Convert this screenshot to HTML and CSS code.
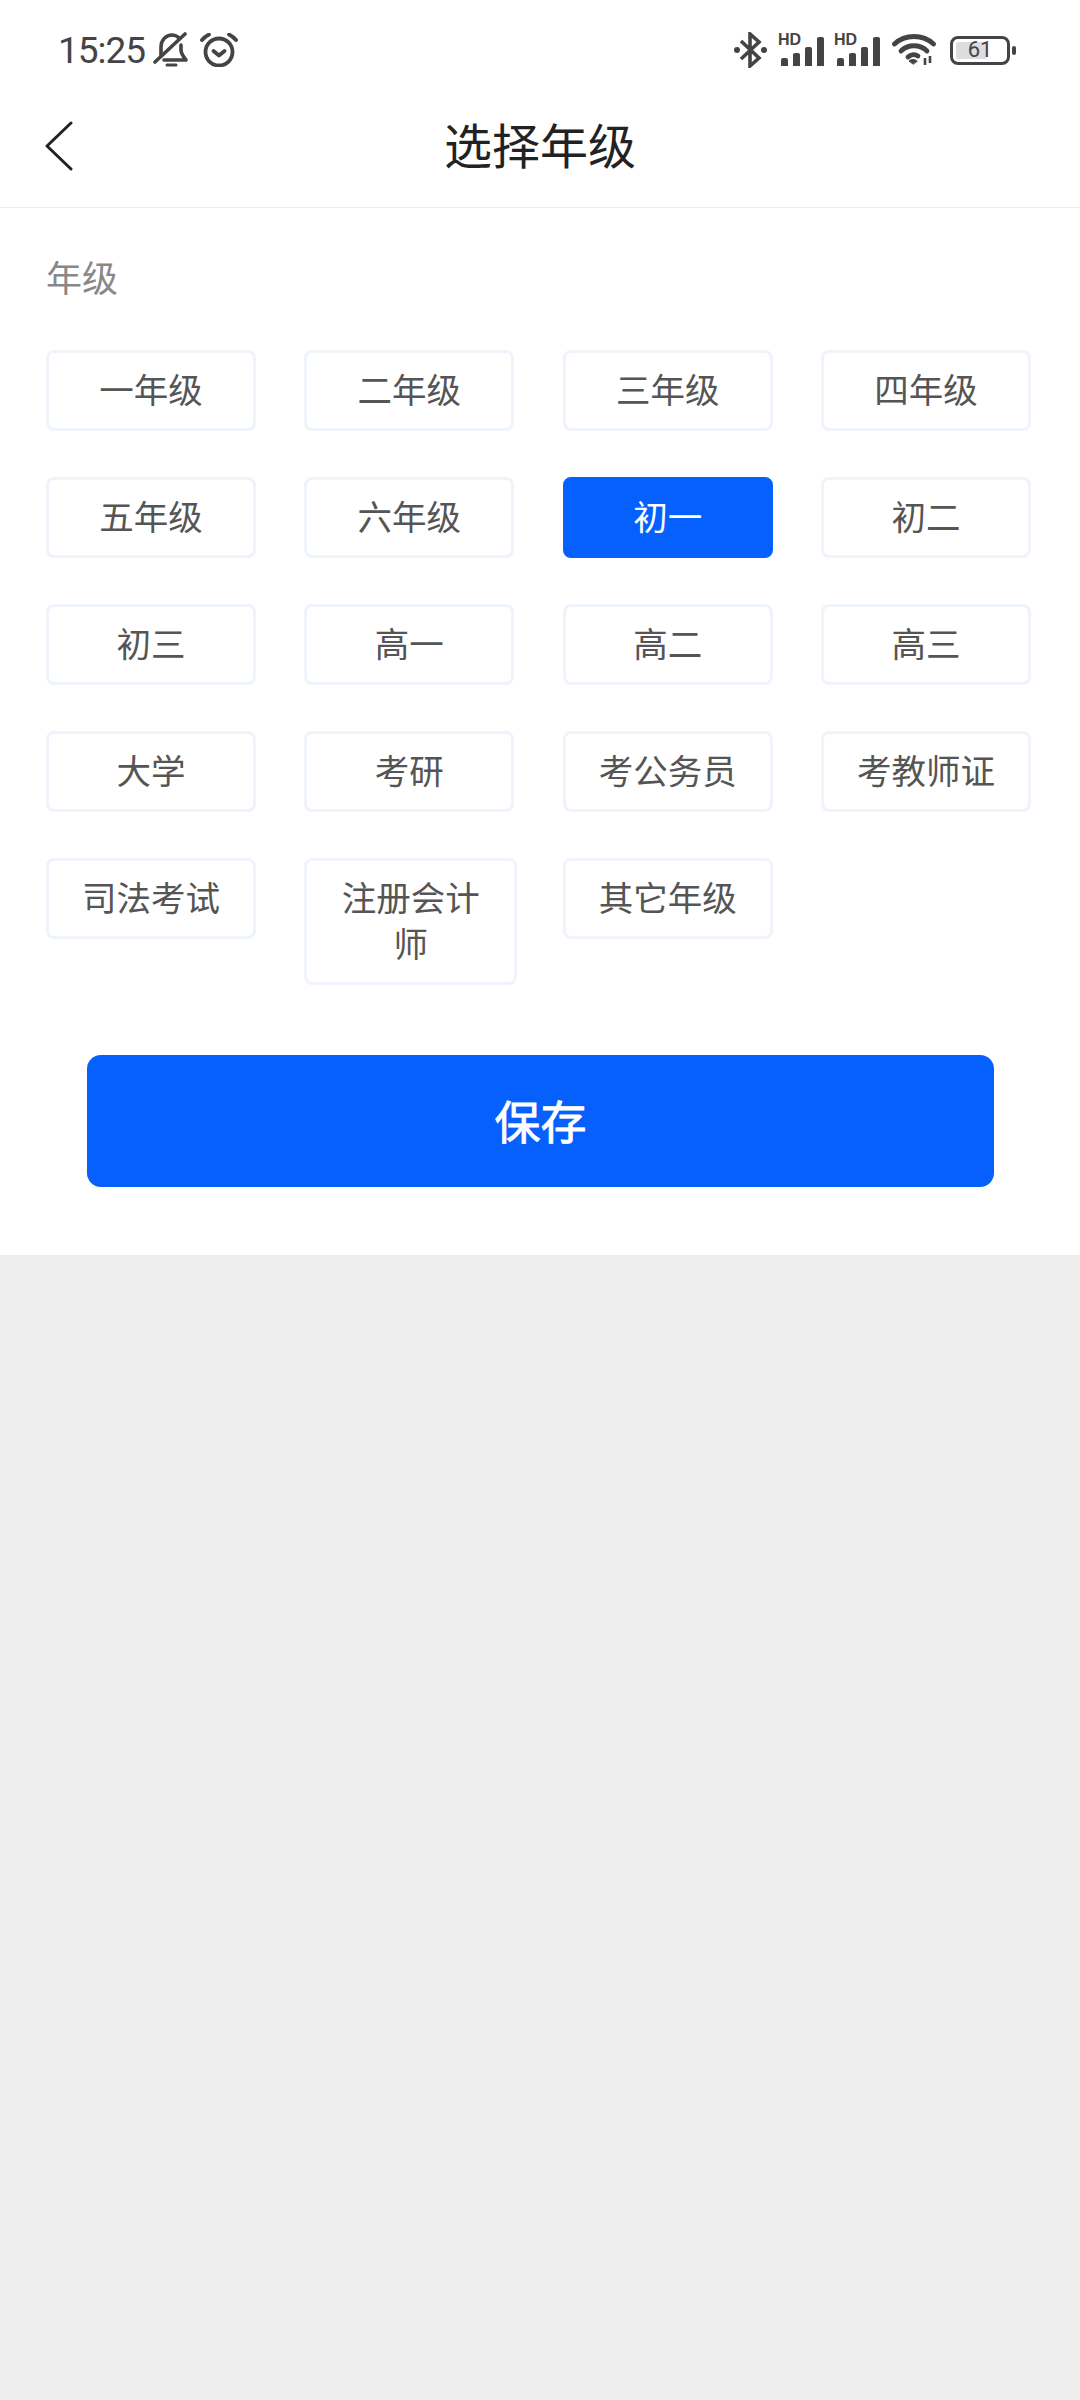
FILE: index.html
```html
<!DOCTYPE html>
<html lang="zh-CN">
<head>
    <meta charset="UTF-8">
    <meta name="viewport" content="width=device-width, initial-scale=1.0">
    <title>选择年级</title>
    <link rel="stylesheet" href="styles.css">
</head>
<body>
    <div class="status-bar">
        <div class="status-left">
            <span class="time">15:25</span>
            <!-- cloche barrée -->
            <svg class="icon-bell" width="36" height="36" viewBox="0 0 36 36" fill="none" stroke="#444" stroke-width="3.6" stroke-linecap="round" stroke-linejoin="round">
                <path d="M8 24V15C8 8 13 3 19 3C22 3 24 4 26 6"/>
                <path d="M28 13V18C28 22 31 25 33 28H11"/>
                <path d="M32 2L2 30"/>
                <path d="M14 33H23" stroke-width="3"/>
            </svg>
            <!-- réveil -->
            <svg class="icon-alarm" width="38" height="34" viewBox="0 0 38 34" fill="none" stroke="#444" stroke-width="3.8" stroke-linecap="round" stroke-linejoin="round">
                <circle cx="19" cy="19" r="13.5"/>
                <path d="M13.5 18L19 22.5L24.5 18"/>
                <path d="M2 7C4 4.5 6 3 9 1.5"/>
                <path d="M36 7C34 4.5 32 3 29 1.5"/>
            </svg>
        </div>
        <div class="status-right">
            <svg class="icon-bt" width="34" height="36" viewBox="0 0 34 36" fill="none" stroke="#444" stroke-width="3.6" stroke-linejoin="miter">
                <path d="M7 9L25 26L16 34V2L25 10L7 27"/>
                <circle cx="3" cy="18" r="3" fill="#444" stroke="none"/>
                <circle cx="30" cy="18" r="3" fill="#444" stroke="none"/>
            </svg>
            <div class="signal">
                <span class="signal-hd">HD</span>
                <div class="bars">
                    <i class="bar bar-1"></i><i class="bar bar-2"></i><i class="bar bar-3"></i><i class="bar bar-4"></i>
                </div>
            </div>
            <div class="signal">
                <span class="signal-hd">HD</span>
                <div class="bars">
                    <i class="bar bar-1"></i><i class="bar bar-2"></i><i class="bar bar-3"></i><i class="bar bar-4"></i>
                </div>
            </div>
            <svg class="icon-wifi" width="44" height="32" viewBox="0 0 44 32" fill="none" stroke="#444" stroke-width="4.8" stroke-linecap="round">
                <path d="M2.500 10C13 0 31 0 41.500 10"/>
                <path d="M9 17C16 10 28 10 35 17"/>
                <path d="M16 23C19 20 23 20 26 22"/>
                <path d="M21 30L17 27C19 25 23 25 25 27Z" fill="#444" stroke-width="1"/>
                <path d="M33 24V31M38 22V29" stroke-width="2.6" stroke-linecap="butt"/>
            </svg>
            <div class="battery">
                <div class="battery-body">
                    <i class="battery-fill"></i>
                    <span class="battery-text">61</span>
                </div>
                <i class="battery-nub"></i>
            </div>
        </div>
    </div>

    <header class="nav">
        <svg class="icon-back" width="28" height="50" viewBox="0 0 28 50" fill="none" stroke="#222" stroke-width="3" stroke-linecap="round" stroke-linejoin="round">
            <path d="M26 2L2 25L26 48"/>
        </svg>
        <h1 class="nav-title">选择年级</h1>
    </header>

    <main class="panel">
        <p class="section-label">年级</p>
        <div class="grade-grid">
            <button class="grade">一年级</button>
            <button class="grade">二年级</button>
            <button class="grade">三年级</button>
            <button class="grade">四年级</button>
            <button class="grade">五年级</button>
            <button class="grade">六年级</button>
            <button class="grade grade-active">初一</button>
            <button class="grade">初二</button>
            <button class="grade">初三</button>
            <button class="grade">高一</button>
            <button class="grade">高二</button>
            <button class="grade">高三</button>
            <button class="grade">大学</button>
            <button class="grade">考研</button>
            <button class="grade">考公务员</button>
            <button class="grade">考教师证</button>
            <button class="grade">司法考试</button>
            <button class="grade grade-long">注册会计师</button>
            <button class="grade">其它年级</button>
        </div>
        <button class="save-button">保存</button>
    </main>
</body>
</html>
```

FILE: styles.css
```css
* {
    box-sizing: border-box;
}

body {
    margin: 0;
    min-height: 2400px;
    background-color: #eee;
    font-family: "Noto Sans CJK SC", "Noto Sans", sans-serif;
}

/* Barre d'état */
.status-bar {
    height: 100px;
    padding: 0 64px 0 58px;
    display: flex;
    justify-content: space-between;
    align-items: center;
    background-color: #fff;
}

.status-left,
.status-right {
    display: flex;
    align-items: center;
}

.time {
    font-family: Roboto, sans-serif;
    font-size: 37px;
    letter-spacing: -1px;
    color: #444;
}

.icon-bell {
    margin-left: 8px;
}

.icon-alarm {
    margin-left: 11px;
}

.signal {
    position: relative;
    width: 46px;
    height: 32px;
    margin-left: 10px;
}

.signal-hd {
    position: absolute;
    left: 0;
    top: 0;
    font-family: "Liberation Sans", sans-serif;
    font-size: 16px;
    font-weight: bold;
    line-height: 12px;
    color: #444;
}

.bars {
    height: 32px;
    display: flex;
    justify-content: flex-end;
    align-items: flex-end;
    gap: 5px;
}

.bar {
    width: 7px;
    background-color: #444;
    border-radius: 2px 2px 0 0;
}

.bar-1 { height: 8px; }
.bar-2 { height: 13px; }
.bar-3 { height: 19px; }
.bar-4 { height: 29px; }

.icon-wifi {
    margin-left: 12px;
}

.battery {
    margin-left: 14px;
    display: flex;
    align-items: center;
    gap: 2px;
}

.battery-body {
    position: relative;
    width: 60px;
    height: 29px;
    border: 3px solid #444;
    border-radius: 8px;
    display: flex;
    justify-content: center;
    align-items: center;
}

.battery-fill {
    position: absolute;
    left: 3px;
    top: 3px;
    bottom: 3px;
    width: 31px;
    background-color: #ddd;
    border-radius: 2px;
}

.battery-text {
    position: relative;
    font-family: Roboto, sans-serif;
    font-size: 22px;
    line-height: 22px;
    color: #444;
}

.battery-nub {
    width: 4px;
    height: 9px;
    background-color: #444;
    border-radius: 2px;
}

/* En-tête */
.nav {
    position: relative;
    height: 108px;
    padding-bottom: 22px;
    display: flex;
    justify-content: center;
    align-items: center;
    background-color: #fff;
    border-bottom: 1px solid #eee;
}

.icon-back {
    position: absolute;
    left: 45px;
    top: 21px;
}

.nav-title {
    margin: 0;
    font-size: 48px;
    font-weight: 400;
    color: #222;
}

/* Contenu */
.panel {
    height: 1047px;
    padding: 40px 49px 0 46px;
    background-color: #fff;
}

.section-label {
    margin: 0;
    height: 56px;
    font-size: 36px;
    line-height: 56px;
    color: #888;
}

.grade-grid {
    margin-top: 46px;
    display: grid;
    grid-template-columns: repeat(4, 210px);
    justify-content: space-between;
    align-items: start;
    row-gap: 46px;
}

.grade {
    padding: 12px 24px 17px;
    background-color: #fff;
    border: 3px solid #eff3fc;
    border-radius: 8px;
    font-family: inherit;
    font-size: 34.5px;
    line-height: 46px;
    color: #555;
}

.grade-long {
    width: 213px;
}

.grade-active {
    background-color: #0560fd;
    border-color: #0560fd;
    color: #fff;
}

.save-button {
    display: block;
    width: 907px;
    height: 132px;
    margin: 70px 0 0 41px;
    padding-bottom: 6px;
    background-color: #0560fd;
    border: none;
    border-radius: 14px;
    font-family: inherit;
    font-size: 46px;
    -webkit-text-stroke: 0.8px #fff;
    color: #fff;
}
```
